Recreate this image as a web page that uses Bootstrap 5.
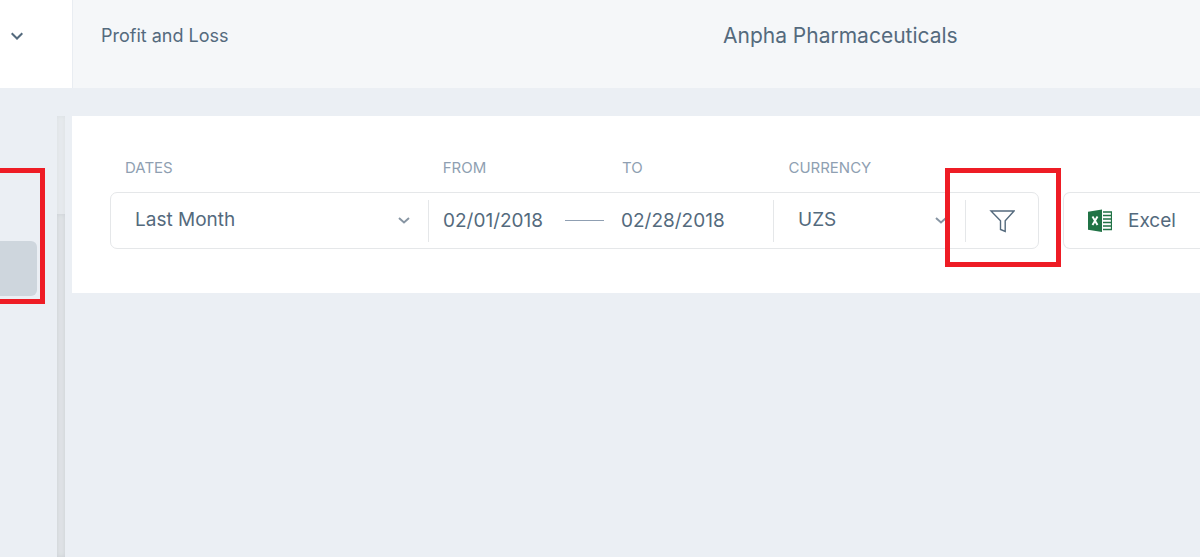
<!DOCTYPE html>
<html lang="en">
<head>
<meta charset="utf-8">
<meta name="viewport" content="width=device-width, initial-scale=1">
<title>Profit and Loss</title>
<link rel="stylesheet" href="https://cdn.jsdelivr.net/npm/bootstrap@5.3.0/dist/css/bootstrap.min.css">
<style>
  :root { --ink: #546a7d; --soft: #8f9fb2; --line: #e5e7e9; --canvas: #ebeff4; --alert: #ee1c25; }
  body { font-family: Inter, "Liberation Sans", sans-serif; color: var(--ink); background: var(--canvas); overflow-x: hidden; }
  .rail { width: 72px; }
  .topbar { height: 88px; background: #f5f7f9; }
  .topbar-title { display: grid; grid-template-columns: 622fr 477fr; padding: 21px 0 0 28px; border-left: 1px solid #e9edf2; }
  .page-name { font-size: 18px; line-height: 30px; }
  .company { font-size: 21px; line-height: 30px; }
  .rail-toggle { padding: 24px 11px; line-height: 0; color: var(--ink); }
  .workspace { padding-top: 28px; }
  .side { padding-top: 125px; }
  .side-link { width: 37px; height: 55px; background: #ced6dd; border-radius: 0 6px 6px 0; }
  .marker { position: absolute; border: 5px solid var(--alert); pointer-events: none; z-index: 2; }
  .marker-side { top: -73px; left: -5px; width: 50px; height: 136px; }
  .marker-filter { top: -32px; right: -23px; width: 116px; height: 99px; }
  .track { width: 8px; margin-right: 7px; background: #e6eaed; box-shadow: inset 0 0 4px #dbe0e3; }
  .thumb { margin-top: 98px; background: #dfe3e6; box-shadow: inset 0 0 4px #cacfd3; }
  .report { padding: 40px 0 44px 38px; }
  .filters { display: grid; grid-template-columns: minmax(0, 1fr) 137px; column-gap: 24px; }
  .fields { display: grid; grid-template-columns: 317fr 179fr 166fr 192fr 73fr; align-items: center; }
  .captions { margin-bottom: 12px; font-size: 15px; line-height: 24px; color: var(--soft); }
  .captions label { padding-left: 15px; }
  .frame { height: 57px; border: 1px solid var(--line); border-radius: 7px; }
  .cell { height: 42px; min-width: 0; }
  .cell-rule { border-left: 1px solid var(--line); }
  .cell .form-select, .cell .form-control { height: 42px; font-size: 19px; color: var(--ink); background-color: transparent; border: 0; border-radius: 0; padding: 0 0 0 24px; }
  .cell .form-control { padding-left: 14px; }
  .cell .form-select {
    background-image: url("data:image/svg+xml,%3Csvg xmlns='http://www.w3.org/2000/svg' viewBox='0 0 12 7'%3E%3Cpath d='M1 1l5 4.4L11 1' fill='none' stroke='%238795a3' stroke-width='2'/%3E%3C/svg%3E");
    background-size: 12px 7px; background-position: right 18px center;
  }
  .dash { flex: 0 0 39px; height: 1px; margin-right: 3px; background: var(--soft); }
  .export { border-right: 0; border-radius: 7px 0 0 7px; background: #fff; padding: 0 0 0 24px; gap: 16px; font-size: 19px; line-height: 30px; color: var(--ink); }
</style>
</head>
<body class="min-vh-100 d-flex flex-column">
  <header class="topbar d-flex">
    <div class="rail flex-shrink-0 bg-white">
      <button type="button" class="btn border-0 rail-toggle" aria-label="Expand menu">
        <svg width="12" height="24" viewBox="0 0 12 24" fill="none" stroke="currentColor" stroke-width="2"><path d="M.7 9.3 6 14.5l5.3-5.2"/></svg>
      </button>
    </div>
    <div class="topbar-title flex-grow-1">
      <h1 class="page-name fw-normal mb-0">Profit and Loss</h1>
      <div class="company">Anpha Pharmaceuticals</div>
    </div>
  </header>

  <div class="workspace d-flex flex-grow-1">
    <div class="rail flex-shrink-0 d-flex justify-content-between">
      <nav class="side" aria-label="Reports">
        <div class="position-relative">
          <a href="#" class="side-link d-block" aria-label="Current report"></a>
          <span class="marker marker-side"></span>
        </div>
      </nav>
      <div class="track d-flex flex-column"><div class="thumb flex-grow-1"></div></div>
    </div>

    <main class="flex-grow-1 overflow-hidden">
      <form class="report bg-white">
        <div class="filters">
          <div class="fields captions">
            <label for="dates">DATES</label>
            <label for="from">FROM</label>
            <label for="to">TO</label>
            <label for="currency">CURRENCY</label>
          </div>
        </div>
        <div class="filters">
          <div class="fields frame">
            <div class="cell"><select id="dates" class="form-select"><option>Last Month</option></select></div>
            <div class="cell cell-rule d-flex align-items-center">
              <input id="from" class="form-control" type="text" value="02/01/2018">
              <span class="dash"></span>
            </div>
            <div class="cell"><input id="to" class="form-control" type="text" value="02/28/2018"></div>
            <div class="cell cell-rule"><select id="currency" class="form-select"><option>UZS</option></select></div>
            <div class="cell cell-rule position-relative">
              <button type="button" class="btn border-0 p-0 w-100 h-100" aria-label="Filter">
                <svg width="26" height="24" viewBox="0 0 26 24" fill="none" stroke="#546a7d" stroke-width="1.4"><path d="M2 2h23l-8.800 9.700v10.800l-4.700-2v-8.800z"/></svg>
              </button>
              <span class="marker marker-filter"></span>
            </div>
          </div>
          <button type="button" class="frame export d-flex align-items-center">
            <svg width="24" height="24" viewBox="0 0 24 24" aria-hidden="true">
              <path d="M0 2.800 14 .5v22.500L0 20.700z" fill="#217346"/>
              <path d="M15 3h8.500v17.500H15M15 6.500h8M15 10h8M15 13.500h8M15 17h8" fill="none" stroke="#217346" stroke-width="1.300"/>
              <path d="m4.500 7.500 5 8.500M9.500 7.500l-5 8.500" stroke="#fff" stroke-width="1.900"/>
            </svg>
            <span>Excel</span>
          </button>
        </div>
      </form>
    </main>
  </div>
<script src="https://cdn.jsdelivr.net/npm/bootstrap@5.3.0/dist/js/bootstrap.bundle.min.js"></script>
</body>
</html>
